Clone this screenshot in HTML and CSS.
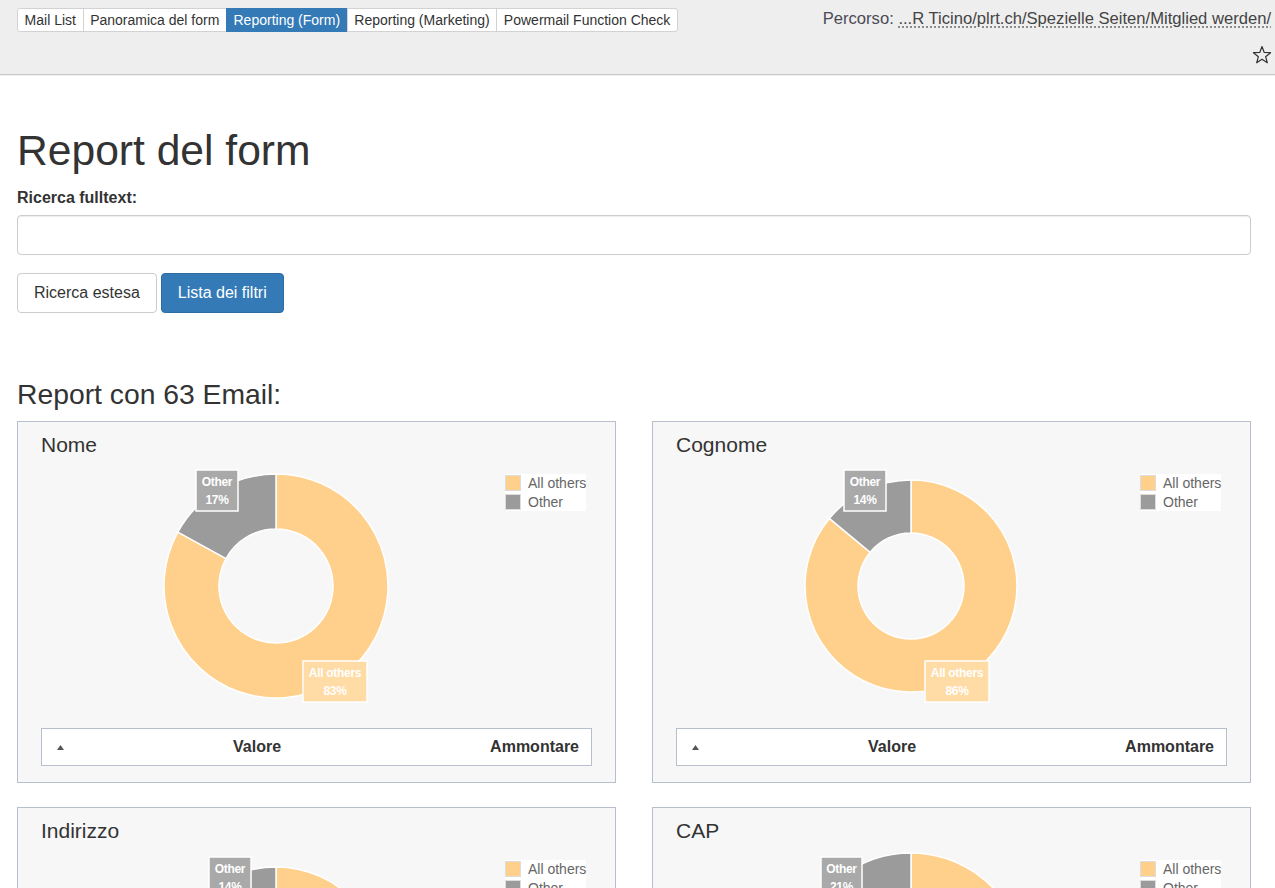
FILE: index.html
```html
<!DOCTYPE html>
<html lang="it">
<head>
<meta charset="utf-8">
<title>Report del form</title>
<link rel="stylesheet" href="styles.css">
</head>
<body>
<header class="topbar">
  <nav class="tabs">
    <a class="tab" href="#">Mail List</a>
    <a class="tab" href="#">Panoramica del form</a>
    <a class="tab active" href="#">Reporting (Form)</a>
    <a class="tab" href="#">Reporting (Marketing)</a>
    <a class="tab" href="#">Powermail Function Check</a>
  </nav>
  <div class="topright">
    <div class="path">Percorso: <span class="path-link">...R Ticino/plrt.ch/Spezielle Seiten/Mitglied werden/</span></div>
    <svg class="star" width="20" height="20" viewBox="0 0 20 20"><polygon points="10,1.5 12.23,7.43 18.56,7.72 13.61,11.67 15.29,17.78 10,14.3 4.71,17.78 6.39,11.67 1.44,7.72 7.77,7.43" fill="none" stroke="#333" stroke-width="1.2" stroke-linejoin="round"/></svg>
  </div>
</header>

<main class="main">
  <h1 class="title">Report del form</h1>
  <label class="field-label" for="q">Ricerca fulltext:</label>
  <input class="field" id="q" type="text">
  <div class="btns">
    <button class="btn btn-default">Ricerca estesa</button>
    <button class="btn btn-primary">Lista dei filtri</button>
  </div>

  <h2 class="subtitle">Report con 63 Email:</h2>

  <div class="cards">
    <section class="card">
      <h3 class="card-title">Nome</h3>
      <svg class="chart" viewBox="0 0 551 271" width="551" height="271">
        <path d="M235 17 A112 112 0 1 1 136.85 75.04 L185.05 101.54 A57 57 0 1 0 235 72 Z" fill="#ffd08b" stroke="#fff" stroke-width="1.5"/>
        <path d="M136.85 75.04 A112 112 0 0 1 235 17 L235 72 A57 57 0 0 0 185.05 101.54 Z" fill="#9b9b9b" stroke="#fff" stroke-width="1.5"/>
        <rect x="155" y="13" width="42" height="41" fill="#a9a9a9" stroke="#fff" stroke-width="1.5"/>
        <text class="lbl" x="176" y="29">Other</text><text class="lbl" x="176" y="47">17%</text>
        <rect x="262" y="204" width="64" height="41" fill="#ffdba5" stroke="#fff" stroke-width="1.5"/>
        <text class="lbl" x="294" y="220">All others</text><text class="lbl" x="294" y="238">83%</text>
        <rect x="464" y="17" width="81" height="37" fill="#fff"/>
        <rect x="464.5" y="18.5" width="15" height="15" fill="#ffd08b" stroke="#ddd"/>
        <rect x="464.5" y="37.5" width="15" height="15" fill="#9b9b9b" stroke="#ddd"/>
        <text class="leg" x="487" y="31">All others</text><text class="leg" x="487" y="50">Other</text>
      </svg>
      <div class="thead"><span class="sort"><svg width="7" height="5" viewBox="0 0 7 5"><polygon points="3.5,0 7,5 0,5" fill="#555"/></svg></span><span>Valore</span><span>Ammontare</span></div>
    </section>

    <section class="card">
      <h3 class="card-title">Cognome</h3>
      <svg class="chart" viewBox="0 0 551 271" width="551" height="271">
        <path d="M235 23 A106 106 0 1 1 153.33 61.44 L194.16 95.22 A53 53 0 1 0 235 76 Z" fill="#ffd08b" stroke="#fff" stroke-width="1.5"/>
        <path d="M153.33 61.44 A106 106 0 0 1 235 23 L235 76 A53 53 0 0 0 194.16 95.22 Z" fill="#9b9b9b" stroke="#fff" stroke-width="1.5"/>
        <rect x="168" y="13" width="42" height="41" fill="#a9a9a9" stroke="#fff" stroke-width="1.5"/>
        <text class="lbl" x="189" y="29">Other</text><text class="lbl" x="189" y="47">14%</text>
        <rect x="249" y="204" width="64" height="41" fill="#ffdba5" stroke="#fff" stroke-width="1.5"/>
        <text class="lbl" x="281" y="220">All others</text><text class="lbl" x="281" y="238">86%</text>
        <rect x="464" y="17" width="81" height="37" fill="#fff"/>
        <rect x="464.5" y="18.5" width="15" height="15" fill="#ffd08b" stroke="#ddd"/>
        <rect x="464.5" y="37.5" width="15" height="15" fill="#9b9b9b" stroke="#ddd"/>
        <text class="leg" x="487" y="31">All others</text><text class="leg" x="487" y="50">Other</text>
      </svg>
      <div class="thead"><span class="sort"><svg width="7" height="5" viewBox="0 0 7 5"><polygon points="3.5,0 7,5 0,5" fill="#555"/></svg></span><span>Valore</span><span>Ammontare</span></div>
    </section>

    <section class="card">
      <h3 class="card-title">Indirizzo</h3>
      <svg class="chart" viewBox="0 0 551 271" width="551" height="271">
        <path d="M235 24 A108 108 0 1 1 151.79 63.16 L192.62 96.94 A55 55 0 1 0 235 77 Z" fill="#ffd08b" stroke="#fff" stroke-width="1.5"/>
        <path d="M151.79 63.16 A108 108 0 0 1 235 24 L235 77 A55 55 0 0 0 192.62 96.94 Z" fill="#9b9b9b" stroke="#fff" stroke-width="1.5"/>
        <rect x="168" y="14" width="42" height="41" fill="#a9a9a9" stroke="#fff" stroke-width="1.5"/>
        <text class="lbl" x="189" y="30">Other</text><text class="lbl" x="189" y="48">14%</text>
        <rect x="249" y="209" width="64" height="41" fill="#ffdba5" stroke="#fff" stroke-width="1.5"/>
        <text class="lbl" x="281" y="225">All others</text><text class="lbl" x="281" y="243">86%</text>
        <rect x="464" y="17" width="81" height="37" fill="#fff"/>
        <rect x="464.5" y="18.5" width="15" height="15" fill="#ffd08b" stroke="#ddd"/>
        <rect x="464.5" y="37.5" width="15" height="15" fill="#9b9b9b" stroke="#ddd"/>
        <text class="leg" x="487" y="31">All others</text><text class="leg" x="487" y="50">Other</text>
      </svg>
      <div class="thead"><span class="sort"><svg width="7" height="5" viewBox="0 0 7 5"><polygon points="3.5,0 7,5 0,5" fill="#555"/></svg></span><span>Valore</span><span>Ammontare</span></div>
    </section>

    <section class="card">
      <h3 class="card-title">CAP</h3>
      <svg class="chart" viewBox="0 0 551 271" width="551" height="271">
        <path d="M235 10 A114 114 0 1 1 124.58 95.65 L178.82 109.58 A58 58 0 1 0 235 66 Z" fill="#ffd08b" stroke="#fff" stroke-width="1.5"/>
        <path d="M124.58 95.65 A114 114 0 0 1 235 10 L235 66 A58 58 0 0 0 178.82 109.58 Z" fill="#9b9b9b" stroke="#fff" stroke-width="1.5"/>
        <rect x="145" y="14" width="41" height="41" fill="#a9a9a9" stroke="#fff" stroke-width="1.5"/>
        <text class="lbl" x="165.5" y="30">Other</text><text class="lbl" x="165.5" y="48">21%</text>
        <rect x="273" y="194" width="64" height="41" fill="#ffdba5" stroke="#fff" stroke-width="1.5"/>
        <text class="lbl" x="305" y="210">All others</text><text class="lbl" x="305" y="228">79%</text>
        <rect x="464" y="17" width="81" height="37" fill="#fff"/>
        <rect x="464.5" y="18.5" width="15" height="15" fill="#ffd08b" stroke="#ddd"/>
        <rect x="464.5" y="37.5" width="15" height="15" fill="#9b9b9b" stroke="#ddd"/>
        <text class="leg" x="487" y="31">All others</text><text class="leg" x="487" y="50">Other</text>
      </svg>
      <div class="thead"><span class="sort"><svg width="7" height="5" viewBox="0 0 7 5"><polygon points="3.5,0 7,5 0,5" fill="#555"/></svg></span><span>Valore</span><span>Ammontare</span></div>
    </section>
  </div>
</main>
</body>
</html>
```

FILE: styles.css
```css
* { box-sizing: border-box; }
html, body { margin: 0; padding: 0; }
body {
  font-family: "Liberation Sans", Arial, sans-serif;
  color: #333;
  background: #fff;
  overflow: hidden;
}

.topbar {
  height: 75px;
  background: #eee;
  border-bottom: 1px solid #c9c9c9;
  box-shadow: 0 1px 1px rgba(0,0,0,0.06);
  display: flex;
  justify-content: space-between;
  align-items: flex-start;
  padding: 0 4px 0 17px;
}

.tabs {
  display: flex;
  margin-top: 8px;
}
.tab {
  display: block;
  font-size: 14px;
  line-height: 16px;
  padding: 3px 6.6px;
  border: 1px solid #d2d2d2;
  margin-left: -1px;
  background: #fff;
  color: #333;
  text-decoration: none;
}
.tab:first-child { margin-left: 0; border-radius: 3px 0 0 3px; }
.tab:last-child { border-radius: 0 3px 3px 0; }
.tab.active {
  background: #337ab7;
  border-color: #337ab7;
  color: #fff;
}

.topright {
  display: flex;
  flex-direction: column;
  align-items: flex-end;
  padding-top: 9px;
}
.path {
  font-size: 16.6px;
  line-height: 20px;
  color: #4a4a55;
}
.path-link {
  color: #444;
  text-decoration: underline dotted #777;
  text-underline-offset: 3px;
}
.star {
  display: block;
  margin-top: 16px;
  margin-right: -1px;
}

.main {
  padding: 0 24px 0 17px;
}

.title {
  font-size: 42.6px;
  font-weight: 400;
  line-height: 46px;
  margin: 52px 0 15px;
  color: #333;
}

.field-label {
  display: block;
  font-size: 16px;
  font-weight: 700;
  line-height: 20px;
  margin-bottom: 7px;
}

.field {
  display: block;
  width: 100%;
  height: 40px;
  border: 1px solid #ccc;
  border-radius: 4px;
  box-shadow: inset 0 1px 1px rgba(0,0,0,0.075);
  font-size: 16px;
  padding: 6px 12px;
  background: #fff;
}

.btns {
  display: flex;
  gap: 4px;
  margin-top: 18px;
}
.btn {
  height: 40px;
  padding: 0 16px;
  font-family: "Liberation Sans", Arial, sans-serif;
  font-size: 16px;
  border-radius: 4px;
  border: 1px solid #ccc;
  cursor: pointer;
}
.btn-default { background: #fff; color: #333; }
.btn-primary { background: #337ab7; border-color: #2e6da4; color: #fff; }

.subtitle {
  font-size: 28.3px;
  font-weight: 400;
  line-height: 31px;
  margin: 66px 0 11px;
  color: #333;
}

.cards {
  display: grid;
  grid-template-columns: 599px 599px;
  column-gap: 36px;
  row-gap: 24px;
}

.card {
  border: 1px solid #b8bfcc;
  background: #f7f7f7;
  padding: 11px 23px 16px;
}
.card-title {
  font-size: 21px;
  font-weight: 400;
  line-height: 24px;
  margin: 0;
  color: #333;
}
.chart {
  display: block;
}
.lbl {
  font-family: "Liberation Sans", Arial, sans-serif;
  font-size: 12px;
  font-weight: 700;
  fill: #fff;
  text-anchor: middle;
  letter-spacing: -0.3px;
}
.leg {
  font-family: "Liberation Sans", Arial, sans-serif;
  font-size: 14px;
  fill: #666;
}

.thead {
  display: grid;
  grid-template-columns: 176px 1fr auto;
  align-items: center;
  height: 38px;
  border: 1px solid #b8bfcc;
  background: #fff;
  padding: 0 12px 0 15px;
  font-size: 16px;
  font-weight: 700;
  color: #333;
}
.sort {
  display: flex;
  align-items: center;
  padding-top: 1px;
}
```
